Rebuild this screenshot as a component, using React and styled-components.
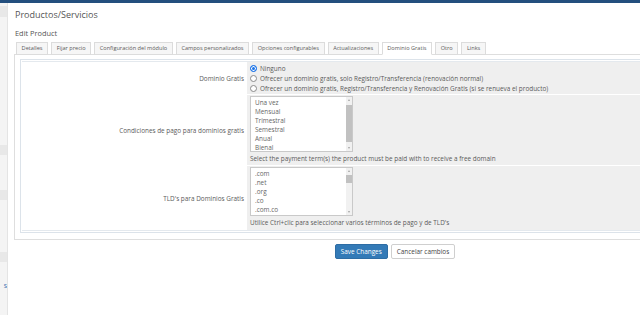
import React from 'react'
import styled, { createGlobalStyle } from 'styled-components'

const GlobalStyle = createGlobalStyle`
    html, body {
        margin:0;
        padding:0;
        background:#fff;
        font-family:"Open Sans", "Liberation Sans", sans-serif;
        color:#555;
    }
`;

const TopBar = styled.div`
    height:3px;
    background-color:#234f7e;
`;

const Layout = styled.div`
    display:flex;
    height:312px;
    overflow:hidden;
`;

const Sidebar = styled.div`
    width:7px;
    flex-shrink:0;
    background-color:#f4f4f4;
    border-right:1px solid #e4e4e4;
    display:flex;
    flex-direction:column;
    overflow:hidden;
`;

const SideBand = styled.div`
    height:${({h})=>h}px;
    flex-shrink:0;
    background-color:${({dark})=>dark ? '#e8e8e8' : 'transparent'};
    color:#3a6fb0;
    font-size:7px;
    line-height:${({h})=>h}px;
    text-align:right;
    white-space:nowrap;
`;

const Main = styled.div`
    flex:1;
    padding:6px 0 0 6px;
    overflow:hidden;
`;

const Content = styled.div`
    width:762px;
`;

const Title = styled.h1`
    margin:0;
    padding-left:1px;
    font-size:9px;
    line-height:12px;
    font-weight:400;
    color:#555;
`;

const SubTitle = styled.h2`
    margin:7px 0 0 0;
    padding-left:1px;
    font-size:7.4px;
    line-height:10px;
    font-weight:400;
    color:#555;
`;

const Tabs = styled.ul`
    list-style:none;
    display:flex;
    margin:4px 0 -1px 2px;
    padding:0;
    position:relative;
    z-index:1;
`;

const Tab = styled.li`
    margin-right:3px;
    padding:0 4.6px;
    height:11px;
    line-height:11px;
    font-size:5.6px;
    color:#5a5a5a;
    white-space:nowrap;
    border:1px solid #dcdcdc;
    border-bottom-color:${({active})=>active ? '#fff' : '#dcdcdc'};
    background-color:${({active})=>active ? '#fff' : '#f6f6f6'};
`;

const Panel = styled.div`
    border:1px solid #dedede;
    padding:4px 5px 6px 5px;
    background:#fff;
`;

const Table = styled.div`
    border:1px solid #dce3ea;
    padding:1px;
`;

const Rows = styled.div`
    border-top:1px solid #e4e9ee;
    border-bottom:1px solid #e4e9ee;
    display:grid;
    grid-template-columns:225px 1fr;
    row-gap:1px;
    background:#fff;
`;

const Label = styled.div`
    display:flex;
    align-items:center;
    justify-content:flex-end;
    padding-right:3px;
    font-size:6.4px;
    color:#5a5a5a;
    background:#fff;
`;

const Field = styled.div`
    background-color:#efefef;
    padding:${({pad})=>pad || '1px 0 1px 3px'};
    font-size:6.4px;
    color:#5a5a5a;
`;

const RadioLine = styled.label`
    display:flex;
    align-items:center;
    height:10px;
    white-space:nowrap;
`;

const RadioDot = styled.span`
    width:5px;
    height:5px;
    border-radius:50%;
    border:1px solid ${({checked})=>checked ? '#1a73e8' : '#8a8a8a'};
    background:${({checked})=>checked ? '#1a73e8' : '#fff'};
    box-shadow:${({checked})=>checked ? 'inset 0 0 0 1px #fff' : 'none'};
    margin-right:3px;
    flex-shrink:0;
`;

const ListBox = styled.div`
    width:101px;
    height:${({h})=>h}px;
    border:1px solid #c9c9c9;
    background:#fff;
    display:flex;
    overflow:hidden;
`;

const Options = styled.ul`
    flex:1;
    list-style:none;
    margin:0;
    padding:1px 0 0 4px;
`;

const Option = styled.li`
    height:9px;
    line-height:9px;
    font-size:6.4px;
    color:#666;
`;

const ScrollTrack = styled.div`
    width:6px;
    background:#f1f1f1;
    display:flex;
    flex-direction:column;
    align-items:center;
`;

const Arrow = styled.span`
    width:0;
    height:0;
    margin:2px 0;
    border-left:1.5px solid transparent;
    border-right:1.5px solid transparent;
    ${({down})=>down ? 'border-top:2px solid #a3a3a3;' : 'border-bottom:2px solid #a3a3a3;'}
`;

const ThumbArea = styled.div`
    flex:1;
    width:100%;
    padding-top:${({offset})=>offset}px;
`;

const Thumb = styled.div`
    width:100%;
    height:${({h})=>h}px;
    background:#c1c1c1;
`;

const Help = styled.div`
    margin-top:2px;
    height:10px;
    line-height:10px;
    font-size:6.4px;
    color:#5a5a5a;
    white-space:nowrap;
`;

const Buttons = styled.div`
    display:flex;
    justify-content:center;
    gap:3px;
    margin-top:4px;
`;

const Button = styled.button`
    height:15px;
    padding:0 5px;
    font-family:"Open Sans", "Liberation Sans", sans-serif;
    font-size:6.4px;
    border-radius:2px;
    border:1px solid ${({primary})=>primary ? '#2e6da4' : '#cfcfcf'};
    background-color:${({primary})=>primary ? '#337ab7' : '#fff'};
    color:${({primary})=>primary ? '#fff' : '#444'};
    cursor:pointer;
`;

const tabs = ['Detalles','Fijar precio','Configuración del módulo','Campos personalizados','Opciones configurables','Actualizaciones','Dominio Gratis','Otro','Links'];
const terms = ['Una vez','Mensual','Trimestral','Semestral','Anual','Bienal'];
const tlds = ['.com','.net','.org','.co','.com.co'];

const Scrollbar = ({offset, size}) => (
    <ScrollTrack>
        <Arrow/>
        <ThumbArea offset={offset}><Thumb h={size}/></ThumbArea>
        <Arrow down/>
    </ScrollTrack>
);

const App = () => (
    <>
        <GlobalStyle/>
        <TopBar/>
        <Layout>
            <Sidebar>
                <SideBand h={3}/>
                <SideBand h={11} dark/>
                <SideBand h={128}/>
                <SideBand h={10} dark/>
                <SideBand h={35}/>
                <SideBand h={10} dark/>
                <SideBand h={52}/>
                <SideBand h={10} dark/>
                <SideBand h={20}/>
                <SideBand h={8}>s</SideBand>
            </Sidebar>
            <Main>
                <Content>
                    <Title>Productos/Servicios</Title>
                    <SubTitle>Edit Product</SubTitle>
                    <Tabs>
                        {tabs.map(t => <Tab key={t} active={t === 'Dominio Gratis'}>{t}</Tab>)}
                    </Tabs>
                    <Panel>
                        <Table>
                            <Rows>
                                <Label>Dominio Gratis</Label>
                                <Field>
                                    <RadioLine><RadioDot checked/>Ninguno</RadioLine>
                                    <RadioLine><RadioDot/>Ofrecer un dominio gratis, solo Registro/Transferencia (renovación normal)</RadioLine>
                                    <RadioLine><RadioDot/>Ofrecer un dominio gratis, Registro/Transferencia y Renovación Gratis (si se renueva el producto)</RadioLine>
                                </Field>
                                <Label>Condiciones de pago para dominios gratis</Label>
                                <Field>
                                    <ListBox h={54}>
                                        <Options>{terms.map(t => <Option key={t}>{t}</Option>)}</Options>
                                        <Scrollbar offset={2} size={37}/>
                                    </ListBox>
                                    <Help>Select the payment term(s) the product must be paid with to receive a free domain</Help>
                                </Field>
                                <Label>TLD's para Dominios Gratis</Label>
                                <Field pad="1px 0 2px 3px">
                                    <ListBox h={47}>
                                        <Options>{tlds.map(t => <Option key={t}>{t}</Option>)}</Options>
                                        <Scrollbar offset={1} size={8}/>
                                    </ListBox>
                                    <Help>Utilice Ctrl+clic para seleccionar varios términos de pago y de TLD's</Help>
                                </Field>
                            </Rows>
                        </Table>
                    </Panel>
                    <Buttons>
                        <Button primary>Save Changes</Button>
                        <Button>Cancelar cambios</Button>
                    </Buttons>
                </Content>
            </Main>
        </Layout>
    </>
);

export default App;
